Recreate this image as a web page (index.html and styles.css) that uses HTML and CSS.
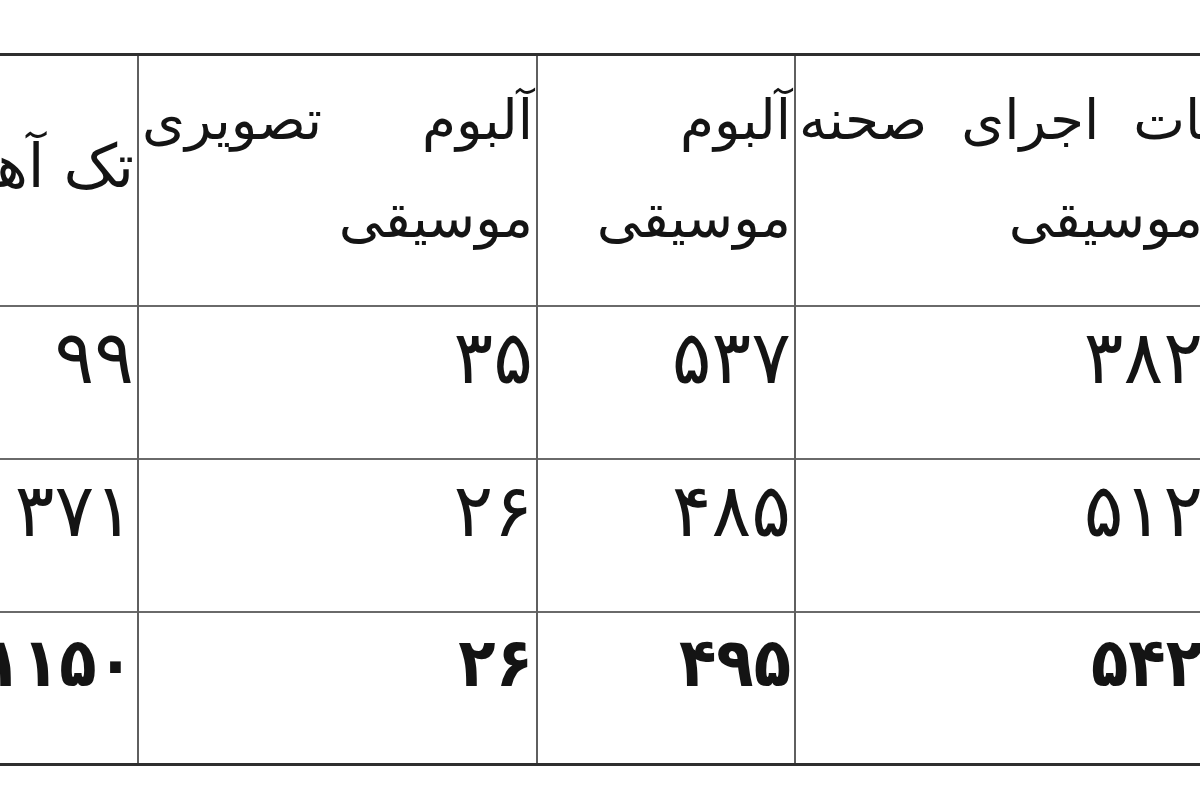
FILE: index.html
```html
<!DOCTYPE html>
<html lang="fa">
<head>
<meta charset="utf-8">
<title>جدول</title>
<link rel="stylesheet" href="styles.css">
</head>
<body>
<div class="viewport">
  <table class="stats" dir="rtl">
    <colgroup>
      <col class="c-a"><col class="c-b"><col class="c-c"><col class="c-d">
    </colgroup>
    <thead>
      <tr>
        <th><span class="l1 wide">جلسات اجرای صحنه</span><span class="l2">موسیقی</span></th>
        <th><span class="l1">آلبوم</span><span class="l2">موسیقی</span></th>
        <th><span class="l1">آلبوم تصویری</span><span class="l2">موسیقی</span></th>
        <th><span class="l2 single">تک آهنگ</span></th>
      </tr>
    </thead>
    <tbody>
      <tr>
        <td>۳۸۲</td><td>۵۳۷</td><td>۳۵</td><td>۹۹</td>
      </tr>
      <tr>
        <td>۵۱۲</td><td>۴۸۵</td><td>۲۶</td><td>۳۷۱</td>
      </tr>
      <tr class="bold">
        <td>۵۴۲</td><td>۴۹۵</td><td>۲۶</td><td>۱۱۵۰</td>
      </tr>
    </tbody>
  </table>
</div>
</body>
</html>
```
FILE: styles.css
```css
html, body {
  margin: 0;
  padding: 0;
  background: #ffffff;
}

.viewport {
  width: 1200px;
  height: 800px;
  overflow: hidden;
  background: #ffffff;
}

.stats {
  direction: rtl;
  table-layout: fixed;
  border-collapse: collapse;
  width: 1356px;
  margin-top: 53px;
  margin-left: -150px;
  font-family: "DejaVu Sans", sans-serif;
  color: #141414;
  border-top: 3px solid #2e2e2e;
  border-bottom: 3px solid #2e2e2e;
}

.c-a { width: 412px; }
.c-b { width: 258px; }
.c-c { width: 399px; }
.c-d { width: 287px; }

.stats th,
.stats td {
  border-left: 2px solid #5f5f5f;
  border-right: 2px solid #5f5f5f;
  padding: 0 3px 0 3px;
  text-align: right;
  overflow: hidden;
}

.stats th {
  height: 251px;
  vertical-align: middle;
  font-weight: normal;
  font-size: 55px;
  line-height: 98px;
  padding-bottom: 22px;
  box-sizing: border-box;
}

.stats td {
  height: 153px;
  vertical-align: top;
  font-size: 74px;
  line-height: 80px;
  padding-top: 10px;
  box-sizing: border-box;
}

.stats tbody tr {
  border-top: 2px solid #6a6a6a;
}

.l1 {
  display: block;
  text-align: justify;
  text-align-last: justify;
  white-space: nowrap;
}

.l1.wide {
  white-space: normal;
  margin-right: -100px;
}

.l2 {
  display: block;
  text-align: right;
  white-space: nowrap;
}

.single {
  font-size: 60px;
  padding-bottom: 6px;
}

.bold td {
  font-family: "DejaVu Sans Condensed", "DejaVu Sans", sans-serif;
  font-weight: bold;
  font-size: 68px;
}
```
